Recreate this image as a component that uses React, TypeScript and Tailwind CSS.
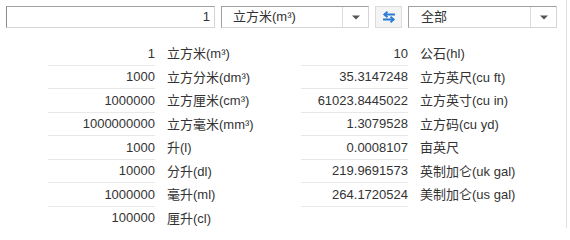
import React from "react";

type Row = { value: string; unit: string };

const leftRows: Row[] = [
  { value: "1", unit: "立方米(m³)" },
  { value: "1000", unit: "立方分米(dm³)" },
  { value: "1000000", unit: "立方厘米(cm³)" },
  { value: "1000000000", unit: "立方毫米(mm³)" },
  { value: "1000", unit: "升(l)" },
  { value: "10000", unit: "分升(dl)" },
  { value: "1000000", unit: "毫升(ml)" },
  { value: "100000", unit: "厘升(cl)" },
];

const rightRows: Row[] = [
  { value: "10", unit: "公石(hl)" },
  { value: "35.3147248", unit: "立方英尺(cu ft)" },
  { value: "61023.8445022", unit: "立方英寸(cu in)" },
  { value: "1.3079528", unit: "立方码(cu yd)" },
  { value: "0.0008107", unit: "亩英尺" },
  { value: "219.9691573", unit: "英制加仑(uk gal)" },
  { value: "264.1720524", unit: "美制加仑(us gal)" },
];

function Caret() {
  return (
    <svg width="8" height="5" viewBox="0 0 8 5">
      <path d="M0 0.5 H8 L4 4.5 Z" fill="#555" />
    </svg>
  );
}

function Select({ label, width, pad }: { label: string; width: string; pad: string }) {
  return (
    <div
      className={`flex h-[22px] ${width} border-t border-l border-t-[#a0a0a0] border-l-[#a0a0a0] border-r border-b border-r-[#d6d6d6] border-b-[#d6d6d6] bg-white`}
    >
      <div className={`flex flex-1 items-center ${pad}`}>{label}</div>
      <div className="flex w-[26px] items-center justify-center border-l border-[#dcdcdc]">
        <Caret />
      </div>
    </div>
  );
}

function SwapIcon() {
  return (
    <svg width="14" height="12" viewBox="0 0 14 12" fill="none" stroke="#2b7bd6" strokeWidth="2">
      <path d="M2.5 3.5 H13" />
      <path d="M5.5 0.8 L2.3 3.5 L5.5 6.2" strokeWidth="1.8" />
      <path d="M1 8.5 H11.5" />
      <path d="M8.5 5.8 L11.7 8.5 L8.5 11.2" strokeWidth="1.8" />
    </svg>
  );
}

function Column({ rows }: { rows: Row[] }) {
  return (
    <div className="flex w-[253px] flex-col">
      {rows.map((r, i) => (
        <div key={i} className="flex h-[23.5px] items-stretch">
          <div className="flex w-[107px] items-center justify-end border-b border-[#e8e8e8]">
            {r.value}
          </div>
          <div className="flex items-center pl-[12px] whitespace-nowrap">{r.unit}</div>
        </div>
      ))}
    </div>
  );
}

export default function App() {
  return (
    <div
      className="h-[228px] w-[567px] overflow-hidden border-r border-[#e0e0e0] bg-white text-[13px] text-[#333]"
      style={{ fontFamily: '"Liberation Sans", Arial, "Noto Sans CJK SC", sans-serif' }}
    >
      {/* 顶部输入栏 */}
      <div className="flex pl-[6px] pt-[6px]">
        <div className="flex h-[22px] w-[209px] items-center justify-end border-t border-l border-t-[#a0a0a0] border-l-[#8c8c8c] border-r border-b border-r-[#d6d6d6] border-b-[#d6d6d6] pr-[4px]">
          1
        </div>
        <div className="ml-[6px]">
          <Select label="立方米(m³)" width="w-[148px]" pad="pl-[11px]" />
        </div>
        <div className="ml-[6px] flex h-[22px] w-[27px] items-center justify-center border border-[#dcdcdc] bg-[#f4f4f4]">
          <SwapIcon />
        </div>
        <div className="ml-[6px]">
          <Select label="全部" width="w-[149px]" pad="pl-[12px]" />
        </div>
      </div>

      {/* 换算结果 */}
      <div className="mt-[14px] flex pl-[48px]">
        <Column rows={leftRows} />
        <Column rows={rightRows} />
      </div>
    </div>
  );
}
